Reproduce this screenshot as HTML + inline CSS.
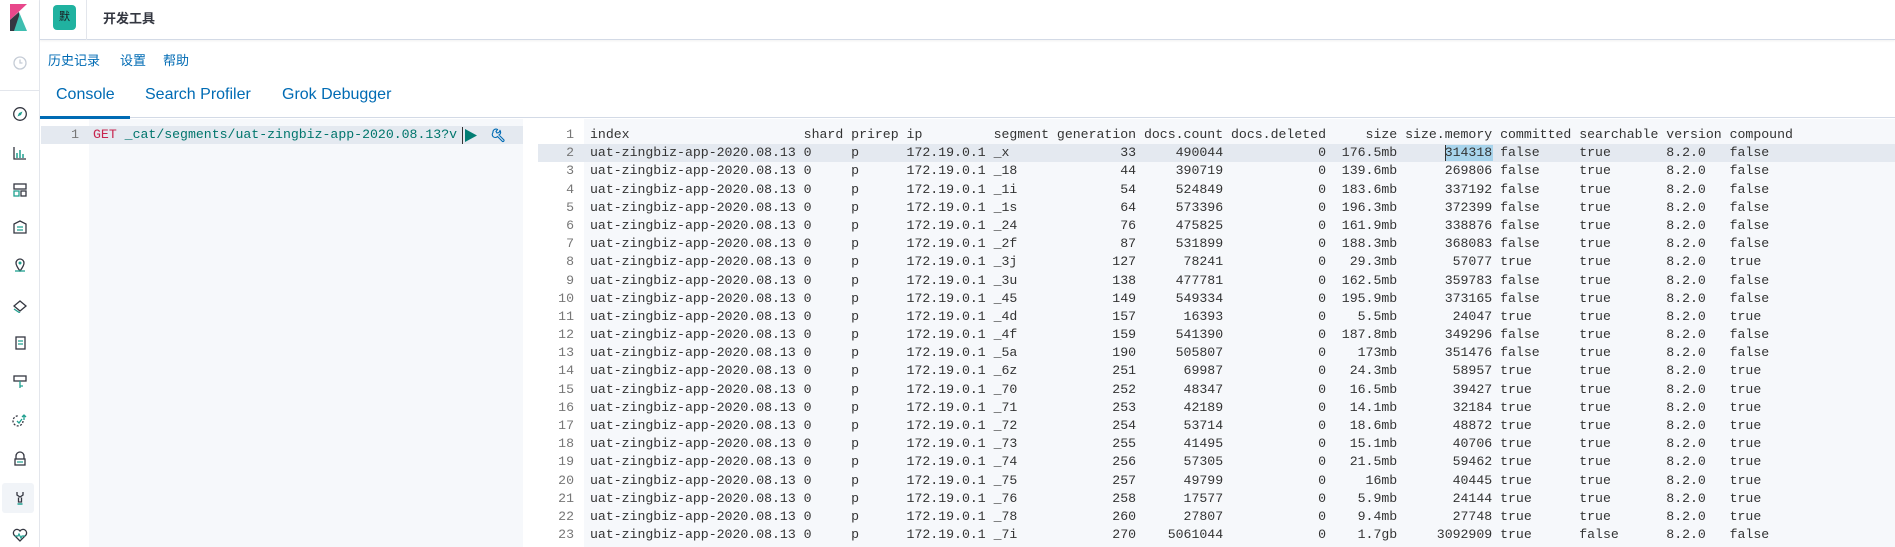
<!DOCTYPE html>
<html><head><meta charset="utf-8"><style>
*{margin:0;padding:0;box-sizing:border-box}
body{width:1895px;height:547px;overflow:hidden;background:#fff;font-family:"Liberation Sans","Noto Sans CJK SC",sans-serif;position:relative}
.side{position:absolute;left:0;top:0;width:40px;height:547px;border-right:1px solid #e3e6ec;background:#fff}
.hdr{position:absolute;left:40px;top:0;right:0;height:40px;border-bottom:1px solid #d3dae6;box-shadow:0 1px 2px rgba(0,0,0,.06)}
.av{position:absolute;left:53px;top:5px;width:23px;height:25px;border-radius:4px;background:#20b2a0;color:#1a1c21;font-size:11px;line-height:25px;text-align:center}
.dv{position:absolute;left:86px;top:0;width:1px;height:40px;background:#e3e6ec}
.ttl{position:absolute;left:103px;top:8px;font-size:13px;color:#343741;font-weight:bold}
.menu{position:absolute;top:50px;font-size:13px;color:#006bb4}
.tab{position:absolute;top:86px;font-size:16px;color:#006bb4}
.tabline{position:absolute;left:40px;top:117px;right:0;height:1px;background:#d3dae6}
.tabul{position:absolute;left:40px;top:116px;width:90px;height:3px;background:#006bb4}
.mono{font-family:"Liberation Mono",monospace;font-size:13.2px;line-height:18.18px;white-space:pre}
.icon{position:absolute;left:12px;width:16px;height:16px}
</style></head><body>
<div class="side">
<svg style="position:absolute;left:10px;top:4px" width="17" height="27" viewBox="0 0 17 27"><path d="M0 0H17L0 16Z" fill="#e8478b"/><path d="M0 16L9 8L17 27H0Z" fill="#3ebeb0"/><path d="M0 16L9 8L9 12L4 27H0Z" fill="#343741"/></svg>
<div style="position:absolute;left:0;top:90px;width:40px;height:1px;background:#e3e6ec"></div>
<svg class="icon" style="top:55px" viewBox="0 0 16 16"><circle cx="8" cy="8" r="6" fill="none" stroke="#c5ccd6" stroke-width="1.3"/><path d="M8 4.5V8H10.5" fill="none" stroke="#c5ccd6" stroke-width="1.3"/></svg>
<svg class="icon" style="top:106px" viewBox="0 0 16 16"><circle cx="8" cy="8" r="6.3" fill="none" stroke="#343741" stroke-width="1.3"/><path d="M10.5 5.5L9 9L5.5 10.5L7 7Z" fill="#20a090"/></svg>
<svg class="icon" style="top:145px" viewBox="0 0 16 16"><path d="M2 2V14H14" fill="none" stroke="#343741" stroke-width="1.3"/><path d="M5 13V8M8 13V5M11 13V9" stroke="#20a090" stroke-width="1.5"/></svg>
<svg class="icon" style="top:182px" viewBox="0 0 16 16"><rect x="2" y="2" width="12" height="5" fill="none" stroke="#343741" stroke-width="1.3"/><rect x="2" y="9" width="5" height="5" fill="none" stroke="#20a090" stroke-width="1.3"/><rect x="9" y="9" width="5" height="5" fill="none" stroke="#343741" stroke-width="1.3"/></svg>
<svg class="icon" style="top:219px" viewBox="0 0 16 16"><path d="M2 14V5L8 2L14 5V14Z" fill="none" stroke="#343741" stroke-width="1.3"/><path d="M5 11H11M5 8H11" stroke="#20a090" stroke-width="1.3"/></svg>
<svg class="icon" style="top:257px" viewBox="0 0 16 16"><path d="M8 14C5 10 4 8 4 6A4 4 0 0 1 12 6C12 8 11 10 8 14Z" fill="none" stroke="#343741" stroke-width="1.3"/><circle cx="8" cy="6" r="1.5" fill="#20a090"/><path d="M3 14H13" stroke="#20a090" stroke-width="1.3"/></svg>
<svg class="icon" style="top:297px" viewBox="0 0 16 16"><path d="M2 9L8 4L14 9L8 14Z" fill="none" stroke="#343741" stroke-width="1.3"/><path d="M2 12L8 16" stroke="#20a090" stroke-width="1.3"/></svg>
<svg class="icon" style="top:335px" viewBox="0 0 16 16"><rect x="4" y="2" width="9" height="12" fill="none" stroke="#343741" stroke-width="1.3"/><path d="M6 6H11M6 9H11" stroke="#20a090" stroke-width="1.3"/></svg>
<svg class="icon" style="top:374px" viewBox="0 0 16 16"><rect x="2" y="2" width="12" height="5" fill="none" stroke="#343741" stroke-width="1.3"/><path d="M8 7V14M8 12H11" stroke="#20a090" stroke-width="1.3"/></svg>
<svg class="icon" style="top:413px" viewBox="0 0 16 16"><path d="M11 8A5 5 0 1 1 7 3" fill="none" stroke="#343741" stroke-width="1.3" stroke-dasharray="2 1.5"/><path d="M5 8L7 10L10 6M12 2V7M10 4L12 2L14 4" fill="none" stroke="#20a090" stroke-width="1.3"/></svg>
<svg class="icon" style="top:451px" viewBox="0 0 16 16"><path d="M4 8V5A4 4 0 0 1 12 5V8" fill="none" stroke="#343741" stroke-width="1.3"/><rect x="3" y="8" width="10" height="6" fill="none" stroke="#343741" stroke-width="1.3"/><path d="M6 10V12M8 10V12M10 10V12" stroke="#20a090" stroke-width="1.2"/></svg>
<div style="position:absolute;left:2px;top:483px;width:32px;height:30px;background:#f1f4f8;border-radius:3px"></div>
<svg class="icon" style="top:490px" viewBox="0 0 16 16"><path d="M5 2V5L8 7L11 5V2M6.5 7.5V12H9.5V7.5" fill="none" stroke="#343741" stroke-width="1.3"/><path d="M5.5 14H10.5" stroke="#20a090" stroke-width="1.5"/></svg>
<svg class="icon" style="top:527px" viewBox="0 0 16 16"><path d="M8 14L2 8A3.2 3.2 0 0 1 8 4A3.2 3.2 0 0 1 14 8Z" fill="none" stroke="#343741" stroke-width="1.3"/><path d="M3 9H6L7 7L9 11L10 9H13" fill="none" stroke="#20a090" stroke-width="1.2"/></svg>
</div>
<div class="hdr"></div>
<div class="av">默</div>
<div class="dv"></div>
<div class="ttl">开发工具</div>
<div class="menu" style="left:48px">历史记录</div>
<div class="menu" style="left:120px">设置</div>
<div class="menu" style="left:163px">帮助</div>
<div class="tab" style="left:56px">Console</div>
<div class="tab" style="left:145px">Search Profiler</div>
<div class="tab" style="left:282px">Grok Debugger</div>
<div class="tabline"></div><div class="tabul"></div>

<div style="position:absolute;left:41px;top:119px;width:48px;bottom:0;background:#fff"></div>
<div style="position:absolute;left:89px;top:119px;width:434px;bottom:0;background:#f6f8fb"></div>
<div style="position:absolute;left:41px;top:126px;width:482px;height:18px;background:#e4e9f0"></div>
<div class="mono" style="position:absolute;left:41px;top:126px;width:38px;text-align:right;color:#777">1</div>
<div class="mono" style="position:absolute;left:93px;top:126px;color:#00756c"><span style="color:#c7254e">GET</span> _cat/segments/uat-zingbiz-app-2020.08.13?v</div>
<div style="position:absolute;left:462px;top:127px;width:1px;height:17px;background:#333"></div>
<svg style="position:absolute;left:465px;top:129px" width="12" height="13" viewBox="0 0 12 13"><path d="M0 0L12 6.5L0 13Z" fill="#017d73"/></svg>
<svg style="position:absolute;left:491px;top:128px" width="15" height="15" viewBox="0 0 15 15"><path d="M2 4.5A3 3 0 0 1 6.5 1.5L5 3.5L6 5L8 4.5L9 2.5A3 3 0 0 1 8 7L13 12A1.2 1.2 0 0 1 11.5 13.5L6.5 8.5A3 3 0 0 1 2 4.5Z" fill="none" stroke="#006bb4" stroke-width="1.1"/></svg>

<div style="position:absolute;left:538px;top:119px;width:46px;bottom:0;background:#fff"></div>
<div style="position:absolute;left:584px;top:119px;right:0;bottom:0;background:#f6f8fb"></div>
<div style="position:absolute;left:538px;top:144px;right:0;height:18px;background:#e4e9f0"></div>
<div style="position:absolute;left:1445px;top:145px;width:48px;height:16px;background:#a8d4ec"></div>
<div style="position:absolute;left:1445px;top:145px;width:1px;height:16px;background:#333"></div>
<div class="mono" style="position:absolute;left:538px;top:126px;width:36px;text-align:right;color:#777">1
2
3
4
5
6
7
8
9
10
11
12
13
14
15
16
17
18
19
20
21
22
23</div>
<div class="mono" style="position:absolute;left:590px;top:126px;color:#333">index                      shard prirep ip         segment generation docs.count docs.deleted     size size.memory committed searchable version compound
uat-zingbiz-app-2020.08.13 0     p      172.19.0.1 _x              33     490044            0  176.5mb      314318 false     true       8.2.0   false
uat-zingbiz-app-2020.08.13 0     p      172.19.0.1 _18             44     390719            0  139.6mb      269806 false     true       8.2.0   false
uat-zingbiz-app-2020.08.13 0     p      172.19.0.1 _1i             54     524849            0  183.6mb      337192 false     true       8.2.0   false
uat-zingbiz-app-2020.08.13 0     p      172.19.0.1 _1s             64     573396            0  196.3mb      372399 false     true       8.2.0   false
uat-zingbiz-app-2020.08.13 0     p      172.19.0.1 _24             76     475825            0  161.9mb      338876 false     true       8.2.0   false
uat-zingbiz-app-2020.08.13 0     p      172.19.0.1 _2f             87     531899            0  188.3mb      368083 false     true       8.2.0   false
uat-zingbiz-app-2020.08.13 0     p      172.19.0.1 _3j            127      78241            0   29.3mb       57077 true      true       8.2.0   true
uat-zingbiz-app-2020.08.13 0     p      172.19.0.1 _3u            138     477781            0  162.5mb      359783 false     true       8.2.0   false
uat-zingbiz-app-2020.08.13 0     p      172.19.0.1 _45            149     549334            0  195.9mb      373165 false     true       8.2.0   false
uat-zingbiz-app-2020.08.13 0     p      172.19.0.1 _4d            157      16393            0    5.5mb       24047 true      true       8.2.0   true
uat-zingbiz-app-2020.08.13 0     p      172.19.0.1 _4f            159     541390            0  187.8mb      349296 false     true       8.2.0   false
uat-zingbiz-app-2020.08.13 0     p      172.19.0.1 _5a            190     505807            0    173mb      351476 false     true       8.2.0   false
uat-zingbiz-app-2020.08.13 0     p      172.19.0.1 _6z            251      69987            0   24.3mb       58957 true      true       8.2.0   true
uat-zingbiz-app-2020.08.13 0     p      172.19.0.1 _70            252      48347            0   16.5mb       39427 true      true       8.2.0   true
uat-zingbiz-app-2020.08.13 0     p      172.19.0.1 _71            253      42189            0   14.1mb       32184 true      true       8.2.0   true
uat-zingbiz-app-2020.08.13 0     p      172.19.0.1 _72            254      53714            0   18.6mb       48872 true      true       8.2.0   true
uat-zingbiz-app-2020.08.13 0     p      172.19.0.1 _73            255      41495            0   15.1mb       40706 true      true       8.2.0   true
uat-zingbiz-app-2020.08.13 0     p      172.19.0.1 _74            256      57305            0   21.5mb       59462 true      true       8.2.0   true
uat-zingbiz-app-2020.08.13 0     p      172.19.0.1 _75            257      49799            0     16mb       40445 true      true       8.2.0   true
uat-zingbiz-app-2020.08.13 0     p      172.19.0.1 _76            258      17577            0    5.9mb       24144 true      true       8.2.0   true
uat-zingbiz-app-2020.08.13 0     p      172.19.0.1 _78            260      27807            0    9.4mb       27748 true      true       8.2.0   true
uat-zingbiz-app-2020.08.13 0     p      172.19.0.1 _7i            270    5061044            0    1.7gb     3092909 true      false      8.2.0   false</div>
</body></html>
